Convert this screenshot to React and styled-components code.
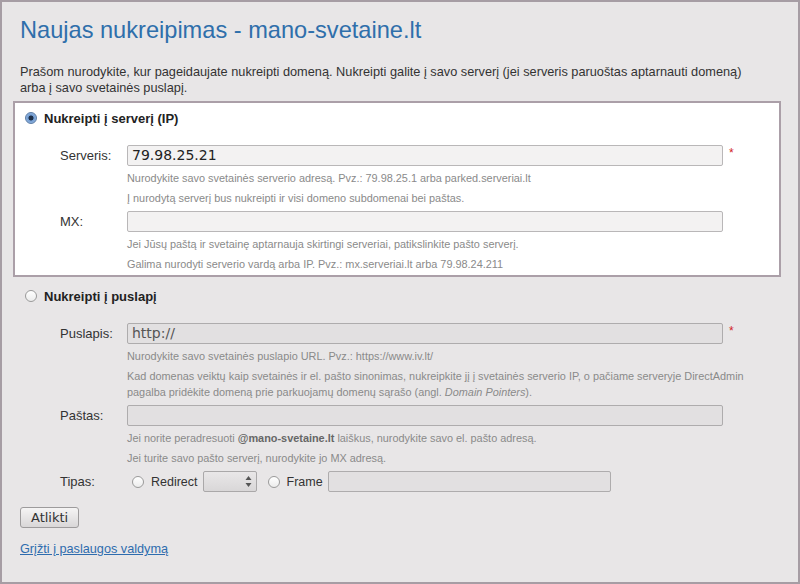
import React from "react";
import styled, { createGlobalStyle } from "styled-components";

const GlobalStyle = createGlobalStyle`
  html, body {
    margin: 0;
    padding: 0;
  }
  body {
    font-family: "Liberation Sans", Arial, sans-serif;
    background: #e8e6e7;
  }
`;

const Frame = styled.div`
  box-sizing: border-box;
  width: 800px;
  height: 584px;
  border: 2px solid #a69da4;
  background: #e8e6e7;
  padding: 14px 17px 0 11px;
  color: #333;
`;

const Title = styled.h1`
  margin: 0 0 20px 7px;
  font-size: 23.6px;
  line-height: 28px;
  font-weight: normal;
  color: #2f6fab;
`;

const Intro = styled.p`
  margin: 0 0 5px 7px;
  font-size: 12.75px;
  line-height: 16px;
  color: #333;
`;

const Section = styled.div`
  border: 2px solid ${(p) => (p.$active ? "#ab9fa8" : "transparent")};
  background: ${(p) => (p.$active ? "#ffffff" : "transparent")};
  padding: 6px 10px 3px;
  margin-bottom: 2px;
`;

const SectionHead = styled.label`
  display: flex;
  align-items: center;
  gap: 7px;
  height: 18px;
  font-size: 13px;
  font-weight: bold;
  color: #222;
`;

const Radio = styled.input.attrs({ type: "radio", readOnly: true })`
  appearance: none;
  box-sizing: border-box;
  width: 12px;
  height: 12px;
  margin: 0;
  border-radius: 50%;
  border: 1px solid ${(p) => (p.checked ? "#5a7ca6" : "#9a9a9a")};
  background: ${(p) =>
    p.checked
      ? "radial-gradient(circle, #1d2f48 0 2.2px, #6f9ad0 2.8px, #a8c5ea 100%)"
      : "linear-gradient(#ffffff, #ececec)"};
  flex: none;
`;

const Fields = styled.div`
  display: flex;
  flex-direction: column;
  gap: 5px;
  margin-top: 18px;
`;

const FieldRow = styled.div`
  display: grid;
  grid-template-columns: 102px auto;
`;

const Label = styled.div`
  padding-left: 35px;
  height: 21px;
  line-height: 21px;
  font-size: 13px;
  color: #333;
`;

const Control = styled.div`
  display: flex;
  align-items: flex-start;
`;

const TextInput = styled.div`
  box-sizing: border-box;
  width: ${(p) => p.$width || 596}px;
  height: 21px;
  border: 1px solid ${(p) => (p.$disabled ? "#aeacad" : "#b9b7b8")};
  border-radius: 2px;
  background: ${(p) => (p.$disabled ? "#e2e0e1" : "#f3f2f2")};
  padding: 0 4px;
  font-family: "DejaVu Sans", sans-serif;
  font-size: 14px;
  line-height: 19px;
  color: ${(p) => (p.$disabled ? "#555" : "#222")};
`;

const Required = styled.span`
  margin-left: 6px;
  margin-top: 2px;
  font-size: 12px;
  line-height: 12px;
  color: #d21f26;
`;

const Hint = styled.p`
  margin: 4px 0 0;
  font-size: 10.9px;
  line-height: 16px;
  color: #8a8a8a;

  b {
    color: #666;
  }
`;

const Options = styled.div`
  display: flex;
  align-items: center;
  height: 21px;
  padding-left: 5px;
  font-size: 12.5px;
  color: #333;
`;

const OptionText = styled.span`
  margin: 0 5px 0 7px;
`;

const Select = styled.div`
  box-sizing: border-box;
  width: 54px;
  height: 21px;
  border: 1px solid #aaa8a9;
  border-radius: 2px;
  background: linear-gradient(#e9e7e8, #d9d7d8);
  display: flex;
  justify-content: flex-end;
  align-items: center;
  padding-right: 4px;
  margin-right: 11px;
`;

const Actions = styled.div`
  margin: 10px 0 0 7px;
`;

const Button = styled.button`
  box-sizing: border-box;
  height: 21px;
  padding: 0 10px;
  border: 1px solid #9d9b9c;
  border-radius: 3px;
  background: linear-gradient(#f5f4f4, #d9d7d8);
  font-family: "DejaVu Sans", sans-serif;
  font-size: 13px;
  line-height: 19px;
  color: #333;
`;

const BackLink = styled.a`
  display: block;
  margin: 13px 0 0 7px;
  font-size: 12.7px;
  line-height: 16px;
  color: #2e6cae;
  text-decoration: underline;
`;

const SpinArrows = () => (
  <svg width="7" height="13" viewBox="0 0 7 13">
    <path d="M3.5 1 L6.5 5 L0.5 5 Z" fill="#555" />
    <path d="M3.5 12 L6.5 8 L0.5 8 Z" fill="#555" />
  </svg>
);

const Field = ({ label, value, disabled, required, width, children }) => (
  <FieldRow>
    <Label>{label}</Label>
    <div>
      <Control>
        <TextInput $disabled={disabled} $width={width}>
          {value}
        </TextInput>
        {required && <Required>*</Required>}
      </Control>
      {children}
    </div>
  </FieldRow>
);

export default function App() {
  return (
    <>
      <GlobalStyle />
      <Frame>
        <Title>Naujas nukreipimas - mano-svetaine.lt</Title>
        <Intro>
          Prašom nurodykite, kur pageidaujate nukreipti domeną. Nukreipti galite į savo serverį (jei serveris
          paruoštas aptarnauti domeną)
          <br />
          arba į savo svetainės puslapį.
        </Intro>

        <Section $active>
          <SectionHead>
            <Radio name="mode" checked />
            Nukreipti į serverį (IP)
          </SectionHead>
          <Fields>
            <Field label="Serveris:" value="79.98.25.21" required>
              <Hint>Nurodykite savo svetainės serverio adresą. Pvz.: 79.98.25.1 arba parked.serveriai.lt</Hint>
              <Hint>Į nurodytą serverį bus nukreipti ir visi domeno subdomenai bei paštas.</Hint>
            </Field>
            <Field label="MX:">
              <Hint>Jei Jūsų paštą ir svetainę aptarnauja skirtingi serveriai, patikslinkite pašto serverį.</Hint>
              <Hint>Galima nurodyti serverio vardą arba IP. Pvz.: mx.serveriai.lt arba 79.98.24.211</Hint>
            </Field>
          </Fields>
        </Section>

        <Section>
          <SectionHead>
            <Radio name="mode" checked={false} />
            Nukreipti į puslapį
          </SectionHead>
          <Fields>
            <Field label="Puslapis:" value="http://" disabled required>
              <Hint>Nurodykite savo svetainės puslapio URL. Pvz.: https://www.iv.lt/</Hint>
              <Hint>
                Kad domenas veiktų kaip svetainės ir el. pašto sinonimas, nukreipkite jį į svetainės serverio IP, o
                pačiame serveryje DirectAdmin
                <br />
                pagalba pridėkite domeną prie parkuojamų domenų sąrašo (angl. <i>Domain Pointers</i>).
              </Hint>
            </Field>
            <Field label="Paštas:" disabled>
              <Hint>
                Jei norite peradresuoti <b>@mano-svetaine.lt</b> laiškus, nurodykite savo el. pašto adresą.
              </Hint>
              <Hint>Jei turite savo pašto serverį, nurodykite jo MX adresą.</Hint>
            </Field>
            <FieldRow>
              <Label>Tipas:</Label>
              <Options>
                <Radio name="type" checked={false} />
                <OptionText>Redirect</OptionText>
                <Select>
                  <SpinArrows />
                </Select>
                <Radio name="type" checked={false} />
                <OptionText>Frame</OptionText>
                <TextInput $disabled $width={283} />
              </Options>
            </FieldRow>
          </Fields>
        </Section>

        <Actions>
          <Button>Atlikti</Button>
        </Actions>
        <BackLink href="#">Grįžti į paslaugos valdymą</BackLink>
      </Frame>
    </>
  );
}
